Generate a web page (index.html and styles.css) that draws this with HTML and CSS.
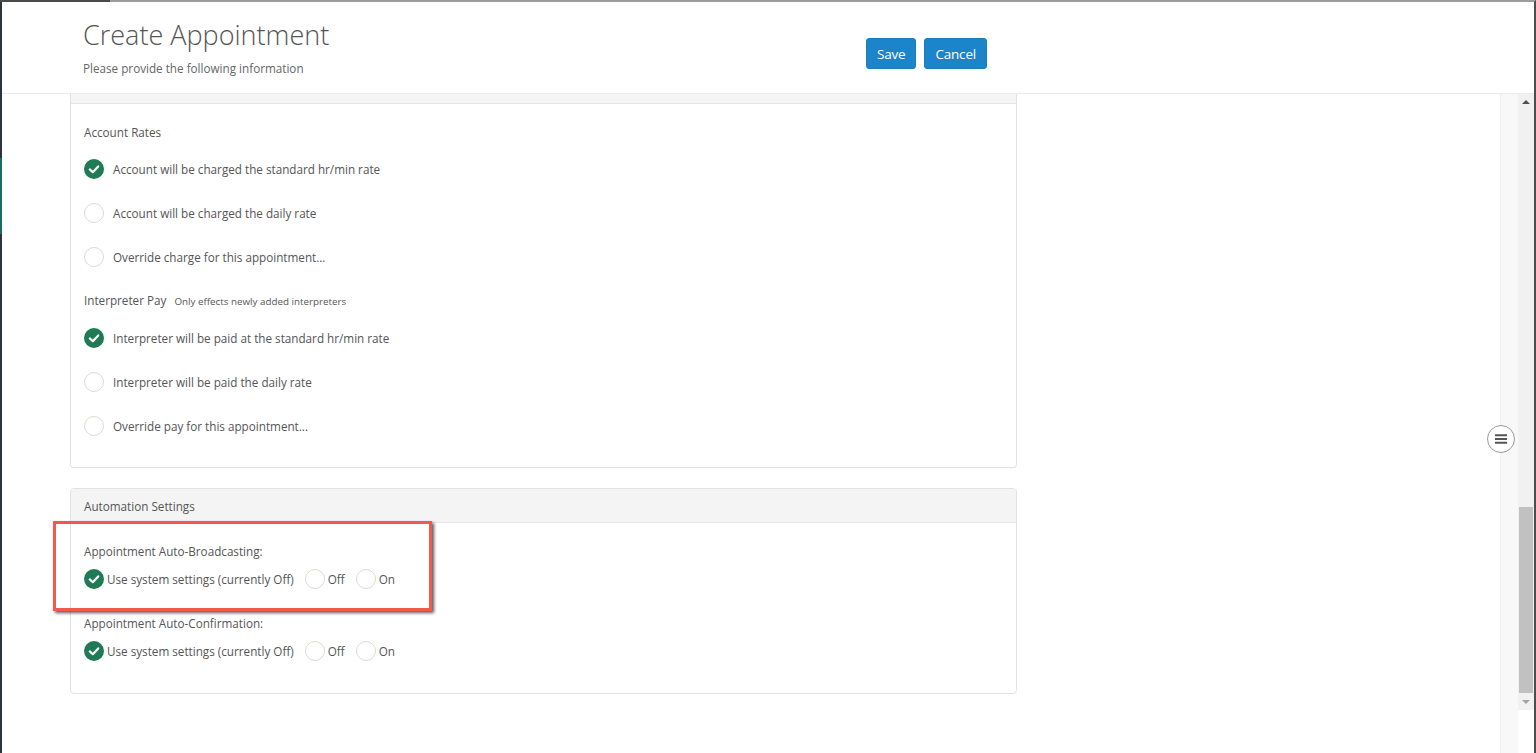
FILE: index.html
```html
<!DOCTYPE html>
<html lang="en">
<head>
<meta charset="utf-8">
<title>Create Appointment</title>
<link rel="stylesheet" href="styles.css">
</head>
<body>
<div class="frame">
  <span class="frame-top-dark"></span>
  <span class="frame-left-accent"></span>
  <header class="page-header">
    <div class="title-block">
      <h1 class="title">Create Appointment</h1>
      <p class="subtitle">Please provide the following information</p>
    </div>
    <div class="actions">
      <button class="btn">Save</button>
      <button class="btn">Cancel</button>
    </div>
  </header>
  <div class="main">
    <div class="content">
      <section class="card card-cont">
        <div class="card-head-stub"></div>
        <div class="card-body body-rates">
          <div class="group-label">Account Rates</div>
          <div class="opt-row first">
            <span class="radio checked"><svg viewBox="0 0 20 20"><circle cx="10" cy="10" r="10" fill="#1f7a56"/><path d="M5.8 10.4 L8.8 13.2 L14.2 7.4" fill="none" stroke="#fff" stroke-width="2.2" stroke-linecap="round" stroke-linejoin="round"/></svg></span>
            <span class="opt-text">Account will be charged the standard hr/min rate</span>
          </div>
          <div class="opt-row">
            <span class="radio"></span>
            <span class="opt-text">Account will be charged the daily rate</span>
          </div>
          <div class="opt-row">
            <span class="radio"></span>
            <span class="opt-text">Override charge for this appointment...</span>
          </div>
          <div class="group-label second">Interpreter Pay <small class="hint">Only effects newly added interpreters</small></div>
          <div class="opt-row first2">
            <span class="radio checked"><svg viewBox="0 0 20 20"><circle cx="10" cy="10" r="10" fill="#1f7a56"/><path d="M5.8 10.4 L8.8 13.2 L14.2 7.4" fill="none" stroke="#fff" stroke-width="2.2" stroke-linecap="round" stroke-linejoin="round"/></svg></span>
            <span class="opt-text">Interpreter will be paid at the standard hr/min rate</span>
          </div>
          <div class="opt-row">
            <span class="radio"></span>
            <span class="opt-text">Interpreter will be paid the daily rate</span>
          </div>
          <div class="opt-row">
            <span class="radio"></span>
            <span class="opt-text">Override pay for this appointment...</span>
          </div>
        </div>
      </section>

      <section class="card card-auto">
        <div class="card-head">Automation Settings</div>
        <div class="card-body body-auto">
          <div class="auto-label">Appointment Auto-Broadcasting:</div>
          <div class="inline-row">
            <span class="radio checked"><svg viewBox="0 0 20 20"><circle cx="10" cy="10" r="10" fill="#1f7a56"/><path d="M5.8 10.4 L8.8 13.2 L14.2 7.4" fill="none" stroke="#fff" stroke-width="2.2" stroke-linecap="round" stroke-linejoin="round"/></svg></span>
            <span class="inline-text">Use system settings (currently Off)</span>
            <span class="radio"></span>
            <span class="inline-text">Off</span>
            <span class="radio"></span>
            <span class="inline-text">On</span>
          </div>
          <div class="auto-label second">Appointment Auto-Confirmation:</div>
          <div class="inline-row">
            <span class="radio checked"><svg viewBox="0 0 20 20"><circle cx="10" cy="10" r="10" fill="#1f7a56"/><path d="M5.8 10.4 L8.8 13.2 L14.2 7.4" fill="none" stroke="#fff" stroke-width="2.2" stroke-linecap="round" stroke-linejoin="round"/></svg></span>
            <span class="inline-text">Use system settings (currently Off)</span>
            <span class="radio"></span>
            <span class="inline-text">Off</span>
            <span class="radio"></span>
            <span class="inline-text">On</span>
          </div>
        </div>
        <div class="highlight-box"></div>
      </section>
    </div>
    <div class="side-strip"></div>
    <div class="scrollbar">
      <div class="track">
        <div class="arrow-box"><span class="arrow-up"></span></div>
        <div class="thumb"></div>
        <div class="arrow-box"><span class="arrow-down"></span></div>
      </div>
    </div>
  </div>
  <button class="menu-btn" aria-label="menu">
    <svg viewBox="0 0 28 28" width="28" height="28"><path d="M7.5 10 H20.5 M7.5 14 H20.5 M7.5 18 H20.5" stroke="#555" stroke-width="2"/></svg>
  </button>
</div>
</body>
</html>
```

FILE: styles.css
```css
html, body {
  margin: 0;
  padding: 0;
  background: #fff;
  overflow: hidden;
}

body {
  font-family: "Open Sans", "Noto Sans", sans-serif;
  color: #555;
}

.frame {
  position: relative;
  height: 753px;
  box-sizing: border-box;
  border-top: 2px solid #9c9c9c;
  border-left: 2px solid #2f3439;
  border-right: 2px solid #4d4d4d;
  display: flex;
  flex-direction: column;
}

.frame-top-dark {
  position: absolute;
  top: -2px;
  left: -2px;
  width: 110px;
  height: 2px;
  background: #4a4a4a;
}

.frame-left-accent {
  position: absolute;
  left: -2px;
  top: 156px;
  width: 2px;
  height: 76px;
  background: #1c6d60;
}

/* header */
.page-header {
  height: 91px;
  border-bottom: 1px solid #ebebeb;
  display: flex;
  align-items: flex-start;
  padding-left: 81px;
  flex: none;
}

.title-block {
  width: 783px;
  padding-top: 15px;
}

.title {
  margin: 0;
  font-size: 27px;
  line-height: 36px;
  font-weight: 300;
  color: #555;
}

.subtitle {
  margin: 7px 0 0;
  font-size: 11.7px;
  line-height: 16px;
  color: #666;
}

.actions {
  display: flex;
  gap: 8px;
  margin-top: 36px;
}

.btn {
  height: 31px;
  padding: 0 10px;
  border: 1px solid #1a7cbd;
  border-radius: 3px;
  background: #1c85c9;
  color: #fff;
  font-family: "Open Sans", sans-serif;
  font-size: 13.5px;
  letter-spacing: -0.2px;
}

/* main area */
.main {
  flex: 1;
  display: flex;
  min-height: 0;
}

.content {
  flex: 1;
  padding-left: 68px;
}

.card {
  position: relative;
  width: 947px;
  box-sizing: border-box;
  border: 1px solid #e2e2e2;
  border-radius: 4px;
}

.card-cont {
  border-top: none;
  border-top-left-radius: 0;
  border-top-right-radius: 0;
}

.card-head-stub {
  height: 9px;
  background: #f5f5f5;
  border-bottom: 1px solid #e6e6e6;
}

.card-body {
  padding-left: 13px;
}

.body-rates {
  padding-top: 20px;
  padding-bottom: 31px;
}

.group-label {
  font-size: 11.7px;
  line-height: 16px;
  height: 16px;
  color: #555;
}

.group-label.second {
  margin-top: 25px;
}

.hint {
  font-size: 9.8px;
  line-height: 10px;
  margin-left: 5px;
  color: #555;
}

.opt-row {
  display: flex;
  align-items: center;
  height: 20px;
  margin-top: 24px;
}

.opt-row.first {
  margin-top: 19px;
}

.opt-row.first2 {
  margin-top: 20px;
}

.radio {
  display: inline-block;
  width: 20px;
  height: 20px;
  box-sizing: border-box;
  border: 1px solid #dcdad4;
  border-radius: 50%;
  flex: none;
}

.radio.checked {
  border: none;
}

.radio svg {
  display: block;
  width: 20px;
  height: 20px;
}

.opt-text {
  margin-left: 9px;
  font-size: 11.7px;
  line-height: 16px;
  color: #555;
}

/* automation card */
.card-auto {
  margin-top: 20px;
}

.card-head {
  height: 33px;
  display: flex;
  align-items: center;
  padding-left: 13px;
  background: #f4f4f4;
  border-bottom: 1px solid #e6e6e6;
  border-radius: 4px 4px 0 0;
  font-size: 11.7px;
  color: #555;
}

.body-auto {
  padding-top: 20px;
  padding-bottom: 32px;
}

.auto-label {
  font-size: 11.7px;
  line-height: 16px;
  height: 16px;
  color: #555;
}

.auto-label.second {
  margin-top: 26px;
}

.inline-row {
  display: flex;
  align-items: center;
  height: 20px;
  margin-top: 10px;
}

.inline-text {
  margin-left: 3px;
  margin-right: 11px;
  font-size: 11.7px;
  line-height: 16px;
  color: #555;
}

.highlight-box {
  position: absolute;
  left: -18px;
  top: 32px;
  width: 379px;
  height: 90px;
  box-sizing: border-box;
  border: 3px solid #f2594c;
  box-shadow: 2px 2px 3px rgba(0, 0, 0, 0.65);
}

/* right strip and scrollbar */
.side-strip {
  width: 17px;
  background: #f8f8f8;
  border-left: 1px solid #efefef;
}

.scrollbar {
  width: 16px;
}

.track {
  height: 616px;
  background: #f1f1f1;
  display: flex;
  flex-direction: column;
}

.arrow-box {
  height: 17px;
  display: flex;
  align-items: center;
  justify-content: center;
}

.arrow-up {
  width: 0;
  height: 0;
  border-left: 4px solid transparent;
  border-right: 4px solid transparent;
  border-bottom: 4px solid #505050;
}

.arrow-down {
  width: 0;
  height: 0;
  border-left: 4px solid transparent;
  border-right: 4px solid transparent;
  border-top: 4px solid #a3a3a3;
}

.thumb {
  margin-top: 396px;
  height: 188px;
  margin-left: 1px;
  margin-right: 1px;
  background: #c1c1c1;
}

.menu-btn {
  position: absolute;
  left: 1485px;
  top: 423px;
  width: 28px;
  height: 28px;
  padding: 0;
  border: 1px solid #9a9a9a;
  border-radius: 50%;
  background: #fff;
  display: flex;
  align-items: center;
  justify-content: center;
}

.menu-btn svg {
  display: block;
  width: 26px;
  height: 26px;
}
```
